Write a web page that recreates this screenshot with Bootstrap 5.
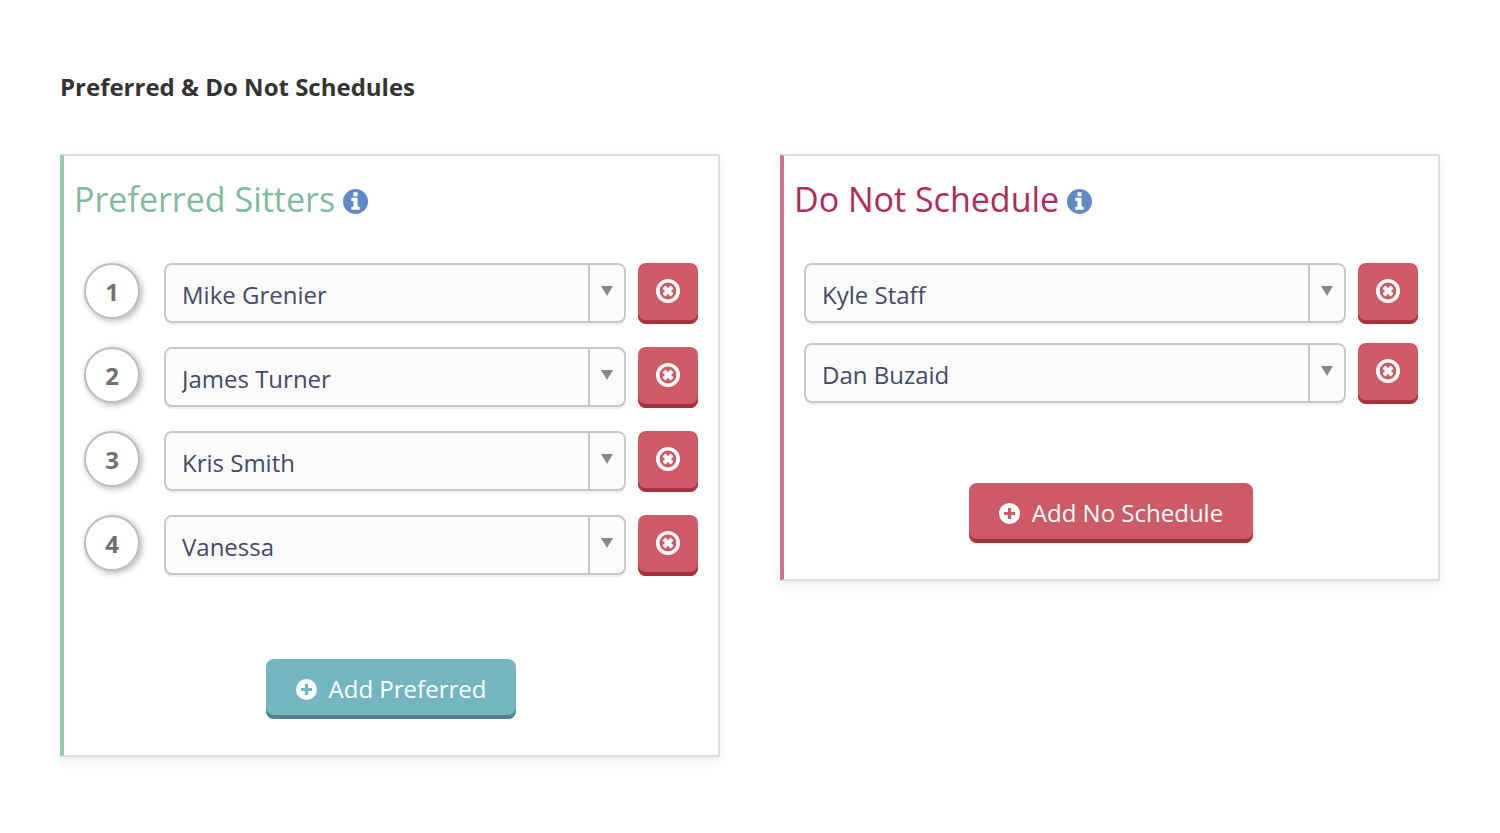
<!DOCTYPE html>
<html lang="en">
<head>
<meta charset="utf-8">
<meta name="viewport" content="width=device-width, initial-scale=1">
<title>Preferred &amp; Do Not Schedules</title>
<link href="https://cdn.jsdelivr.net/npm/bootstrap@5.3.0/dist/css/bootstrap.min.css" rel="stylesheet">
<style>
  body { font-family: "Open Sans", sans-serif; font-size: 24px; color: #333; background: #fff; }
  .page { padding: 70px 60px; }
  .page-title { font-size: 24px; line-height: 34px; font-weight: 700; margin-bottom: 50px; color: #333; }
  .panels { --bs-gutter-x: 60px; --bs-gutter-y: 40px; }
  .panel { border: 2px solid #ddd; border-left: 4px solid; border-radius: 2px; box-shadow: 0 4px 12px rgba(0,0,0,.08); padding-bottom: 36px; }
  .panel-preferred { border-left-color: #94c9b0; }
  .panel-blocked { border-left-color: #cb7594; }
  .panel-title { font-size: 34px; line-height: 46px; font-weight: 370; padding: 20px 10px 0; margin-bottom: 41px; gap: 8px; }
  .panel-preferred .panel-title { color: #80bb9e; }
  .panel-blocked .panel-title { color: #b02a5b; }
  .info { color: #5f8ac7; line-height: 0; margin-top: 5px; }
  .sitters { padding: 0 20px; display: grid; gap: 24px; }
  .panel-blocked .sitters { gap: 20px; }
  .sitter { height: 60px; gap: 12px; }
  .rank { width: 56px; height: 56px; border: 2px solid #bbb; border-radius: 50%; box-shadow: 2px 2px 6px rgba(0,0,0,.3); color: #707070; font-weight: 700; line-height: 54px; margin-right: 12px; }
  .form-select.pick { width: auto; height: 60px; padding: 4px 48px 0 16px; font-size: 24px; line-height: 36px; color: #434a65;
    border: 2px solid #c8c8c8; border-radius: 8px; box-shadow: 0 2px 0 #eee;
    background: #fbfbfb url("data:image/svg+xml,%3Csvg xmlns='http://www.w3.org/2000/svg' width='36' height='56'%3E%3Cpath fill='%23c8c8c8' d='M0 0h2v56H0z'/%3E%3Cpath fill='%23888' d='M13 21h12l-6 10z'/%3E%3C/svg%3E") no-repeat right center / 36px 56px; }
  .action { color: #fff; border: 0; border-radius: 8px; height: 60px; font-size: 24px; line-height: 36px; }
  .action:hover { color: #fff; }
  .action-red, .action-red:hover { background: #cd5a66; box-shadow: inset 0 -4px 0 #a8303c; }
  .action-teal, .action-teal:hover { background: #73b6c0; box-shadow: inset 0 -4px 0 #4f848e; }
  .remove { width: 60px; height: 61px; padding: 0 0 5px; }
  .add { padding: 0 30px; gap: 12px; }
  .panel-foot { margin-top: 84px; }
  .panel-blocked .panel-foot { margin-top: 80px; }
</style>
</head>
<body>
<svg class="d-none" aria-hidden="true">
  <symbol id="i-info" viewBox="0 0 24 24"><circle cx="12" cy="12" r="12" fill="currentColor"/><path fill="#fff" d="M10 3h4v4h-4zM8 8.500h6V17h2v3H8v-3h2v-5.500H8z"/></symbol>
  <symbol id="i-remove" viewBox="0 0 24 24"><circle cx="12" cy="12" r="10.200" fill="none" stroke="currentColor" stroke-width="3.600"/><path d="M7.900 7.900l8.200 8.200M16.100 7.900l-8.200 8.200" stroke="currentColor" stroke-width="4.200"/></symbol>
  <symbol id="i-add" viewBox="0 0 22 22"><path fill="currentColor" fill-rule="evenodd" d="M11 0a11 11 0 1 0 0 22a11 11 0 1 0 0-22zM9.300 5.200h3.400v4.100h4.100v3.400h-4.100v4.100H9.300v-4.100H5.200V9.300h4.100z"/></symbol>
</svg>
<main class="page container-fluid">
  <h1 class="page-title">Preferred &amp; Do Not Schedules</h1>
  <div class="row panels align-items-start">
    <div class="col-12 col-lg-6">
      <section class="panel panel-preferred">
        <h2 class="panel-title d-flex align-items-center">Preferred Sitters <span class="info"><svg width="25" height="25" role="img" aria-label="Information"><use href="#i-info"/></svg></span></h2>
        <div class="sitters">
          <div class="sitter d-flex">
            <label class="rank text-center flex-shrink-0" for="p1">1</label>
            <select class="form-select pick flex-fill" id="p1"><option>Mike Grenier</option></select>
            <button class="btn action action-red remove flex-shrink-0" type="button" aria-label="Remove Mike Grenier"><svg class="d-block mx-auto" width="24" height="24"><use href="#i-remove"/></svg></button>
          </div>
          <div class="sitter d-flex">
            <label class="rank text-center flex-shrink-0" for="p2">2</label>
            <select class="form-select pick flex-fill" id="p2"><option>James Turner</option></select>
            <button class="btn action action-red remove flex-shrink-0" type="button" aria-label="Remove James Turner"><svg class="d-block mx-auto" width="24" height="24"><use href="#i-remove"/></svg></button>
          </div>
          <div class="sitter d-flex">
            <label class="rank text-center flex-shrink-0" for="p3">3</label>
            <select class="form-select pick flex-fill" id="p3"><option>Kris Smith</option></select>
            <button class="btn action action-red remove flex-shrink-0" type="button" aria-label="Remove Kris Smith"><svg class="d-block mx-auto" width="24" height="24"><use href="#i-remove"/></svg></button>
          </div>
          <div class="sitter d-flex">
            <label class="rank text-center flex-shrink-0" for="p4">4</label>
            <select class="form-select pick flex-fill" id="p4"><option>Vanessa</option></select>
            <button class="btn action action-red remove flex-shrink-0" type="button" aria-label="Remove Vanessa"><svg class="d-block mx-auto" width="24" height="24"><use href="#i-remove"/></svg></button>
          </div>
        </div>
        <div class="panel-foot d-flex justify-content-center">
          <button class="btn action action-teal add d-flex align-items-center" type="button"><svg width="21" height="21" aria-hidden="true"><use href="#i-add"/></svg>Add Preferred</button>
        </div>
      </section>
    </div>
    <div class="col-12 col-lg-6">
      <section class="panel panel-blocked">
        <h2 class="panel-title d-flex align-items-center">Do Not Schedule <span class="info"><svg width="25" height="25" role="img" aria-label="Information"><use href="#i-info"/></svg></span></h2>
        <div class="sitters">
          <div class="sitter d-flex">
            <select class="form-select pick flex-fill" aria-label="Do not schedule 1"><option>Kyle Staff</option></select>
            <button class="btn action action-red remove flex-shrink-0" type="button" aria-label="Remove Kyle Staff"><svg class="d-block mx-auto" width="24" height="24"><use href="#i-remove"/></svg></button>
          </div>
          <div class="sitter d-flex">
            <select class="form-select pick flex-fill" aria-label="Do not schedule 2"><option>Dan Buzaid</option></select>
            <button class="btn action action-red remove flex-shrink-0" type="button" aria-label="Remove Dan Buzaid"><svg class="d-block mx-auto" width="24" height="24"><use href="#i-remove"/></svg></button>
          </div>
        </div>
        <div class="panel-foot d-flex justify-content-center">
          <button class="btn action action-red add d-flex align-items-center" type="button"><svg width="21" height="21" aria-hidden="true"><use href="#i-add"/></svg>Add No Schedule</button>
        </div>
      </section>
    </div>
  </div>
</main>
<script src="https://cdn.jsdelivr.net/npm/bootstrap@5.3.0/dist/js/bootstrap.bundle.min.js"></script>
</body>
</html>
